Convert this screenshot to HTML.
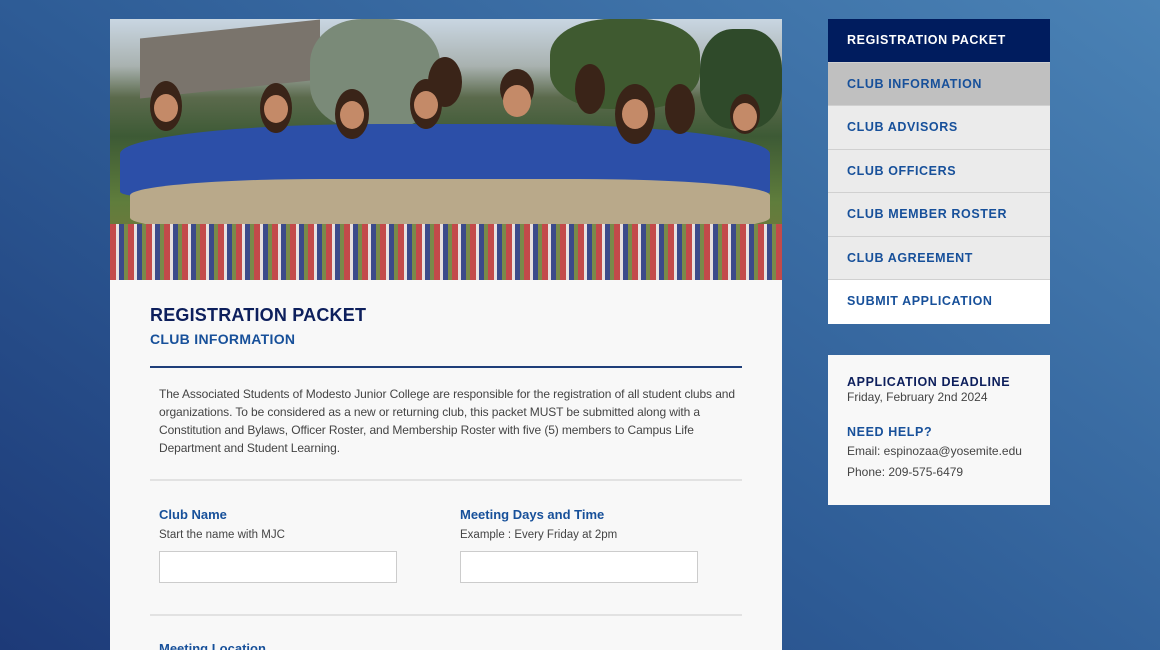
<!DOCTYPE html>
<html style="background:#2e5c96"><head><style>
*{margin:0;padding:0;box-sizing:border-box}
html,body{width:1160px;height:650px;overflow:hidden}
body{position:relative;font-family:"Liberation Sans",sans-serif;background:linear-gradient(35deg,#1d3a78 0%,#2e5c96 45%,#4a82b5 100%)}
.main{position:absolute;left:110px;top:19px;width:672px;height:631px;background:#f8f8f8;overflow:hidden}
.photo{position:absolute;left:0;top:0;width:672px;height:261px;overflow:hidden;
background:linear-gradient(180deg,#c9d6e2 0%,#a9b2b0 18%,#5b6a4c 30%,#3d5a35 45%,#5f7d3c 70%,#6a7a3c 80%,#8a5a5a 88%,#5a3c5a 100%)}
.shirt{position:absolute;background:#2c4fa8;border-radius:40% 40% 10% 10%}
.pants{position:absolute;background:#b9a98a;border-radius:30%}
.head{position:absolute;background:#3a2418;border-radius:50%}
.face{position:absolute;background:#c48a68;border-radius:50%}
.flags{position:absolute;left:0;top:205px;width:672px;height:56px;background:repeating-linear-gradient(90deg,#c34a4a 0 6px,#e8e0e0 6px 9px,#3c4a8a 9px 14px,#7a8a4a 14px 18px)}
h1{position:absolute;left:40px;top:286px;font-size:18px;font-weight:900;color:#0d1f5c;letter-spacing:.2px}
h2{position:absolute;left:40px;top:312px;font-size:14px;font-weight:900;color:#17509a;letter-spacing:.3px}
.hr1{position:absolute;left:40px;top:347px;width:592px;height:2px;background:#1f3f7a}
.p{position:absolute;left:49px;top:366px;width:585px;font-size:12px;line-height:18px;color:#444;letter-spacing:-.1px}
.hr{position:absolute;left:40px;width:592px;height:2px;background:#e2e2e2}
.lab{position:absolute;font-size:13px;font-weight:bold;color:#17509a}
.sub{position:absolute;font-size:11.5px;color:#444}
.inp{position:absolute;width:238px;height:32px;background:#fff;border:1px solid #ccc}
.nav{position:absolute;left:828px;top:19px;width:222px}
.nav div{height:43.5px;line-height:42px;padding-left:19px;font-size:12.5px;font-weight:900;letter-spacing:.6px;color:#17509a;background:#ebebeb;border-bottom:1px solid #d0d0d0}
.nav .a{background:#001c5e;color:#fff}
.nav .s{background:#c0c0c0}
.nav .w{background:#fff;border:none}
.box{position:absolute;left:828px;top:355px;width:222px;height:150px;background:#f8f8f8;padding:20px 19px}
.box b{display:block;font-size:12.5px;font-weight:900;letter-spacing:.6px;color:#0d1f5c}
.box p{font-size:12px;color:#444;line-height:21px}
</style></head><body>
<div class="main">
 <div class="photo">
  <div style="position:absolute;left:30px;top:10px;width:180px;height:60px;background:#7a746c;transform:skewY(-6deg)"></div>
  <div style="position:absolute;left:200px;top:0;width:130px;height:110px;background:#7a8a78;border-radius:40%"></div>
  <div style="position:absolute;left:440px;top:0;width:150px;height:90px;background:#3f5a30;border-radius:40%"></div>
  <div style="position:absolute;left:590px;top:10px;width:82px;height:100px;background:#2f4a2a;border-radius:40%"></div>
  <div class="shirt" style="left:10px;top:105px;width:650px;height:75px"></div>
  <div class="pants" style="left:20px;top:160px;width:640px;height:55px"></div>
  <div class="head" style="left:40px;top:62px;width:32px;height:50px"></div>
  <div class="head" style="left:150px;top:64px;width:32px;height:50px"></div>
  <div class="head" style="left:225px;top:70px;width:34px;height:50px"></div>
  <div class="head" style="left:300px;top:60px;width:32px;height:50px"></div>
  <div class="head" style="left:318px;top:38px;width:34px;height:50px"></div>
  <div class="head" style="left:390px;top:50px;width:34px;height:40px"></div>
  <div class="head" style="left:465px;top:45px;width:30px;height:50px"></div>
  <div class="head" style="left:505px;top:65px;width:40px;height:60px"></div>
  <div class="head" style="left:555px;top:65px;width:30px;height:50px"></div>
  <div class="head" style="left:620px;top:75px;width:30px;height:40px"></div>
  <div class="face" style="left:44px;top:75px;width:24px;height:28px"></div>
  <div class="face" style="left:154px;top:76px;width:24px;height:28px"></div>
  <div class="face" style="left:230px;top:82px;width:24px;height:28px"></div>
  <div class="face" style="left:304px;top:72px;width:24px;height:28px"></div>
  <div class="face" style="left:393px;top:66px;width:28px;height:32px"></div>
  <div class="face" style="left:512px;top:80px;width:26px;height:30px"></div>
  <div class="face" style="left:623px;top:84px;width:24px;height:28px"></div>
  <div class="flags"></div>
 </div>
 <h1>REGISTRATION PACKET</h1>
 <h2>CLUB INFORMATION</h2>
 <div class="hr1"></div>
 <div class="p">The Associated Students of Modesto Junior College are responsible for the registration of all student clubs and organizations. To be considered as a new or returning club, this packet MUST be submitted along with a Constitution and Bylaws, Officer Roster, and Membership Roster with five (5) members to Campus Life Department and Student Learning.</div>
 <div class="hr" style="top:460px"></div>
 <div class="lab" style="left:49px;top:488px">Club Name</div>
 <div class="sub" style="left:49px;top:510px">Start the name with MJC</div>
 <div class="inp" style="left:49px;top:532px"></div>
 <div class="lab" style="left:350px;top:488px">Meeting Days and Time</div>
 <div class="sub" style="left:350px;top:510px">Example : Every Friday at 2pm</div>
 <div class="inp" style="left:350px;top:532px"></div>
 <div class="hr" style="top:595px"></div>
 <div class="lab" style="left:49px;top:622px">Meeting Location</div>
</div>
<div class="nav">
 <div class="a" style="color:#fff">REGISTRATION PACKET</div>
 <div class="s">CLUB INFORMATION</div>
 <div>CLUB ADVISORS</div>
 <div>CLUB OFFICERS</div>
 <div>CLUB MEMBER ROSTER</div>
 <div>CLUB AGREEMENT</div>
 <div class="w">SUBMIT APPLICATION</div>
</div>
<div class="box">
 <b>APPLICATION DEADLINE</b>
 <p style="line-height:16px">Friday, February 2nd 2024</p>
 <b style="color:#17509a;margin-top:20px">NEED HELP?</b>
 <p style="margin-top:2px">Email: espinozaa@yosemite.edu<br>Phone: 209-575-6479</p>
</div>
</body></html>
